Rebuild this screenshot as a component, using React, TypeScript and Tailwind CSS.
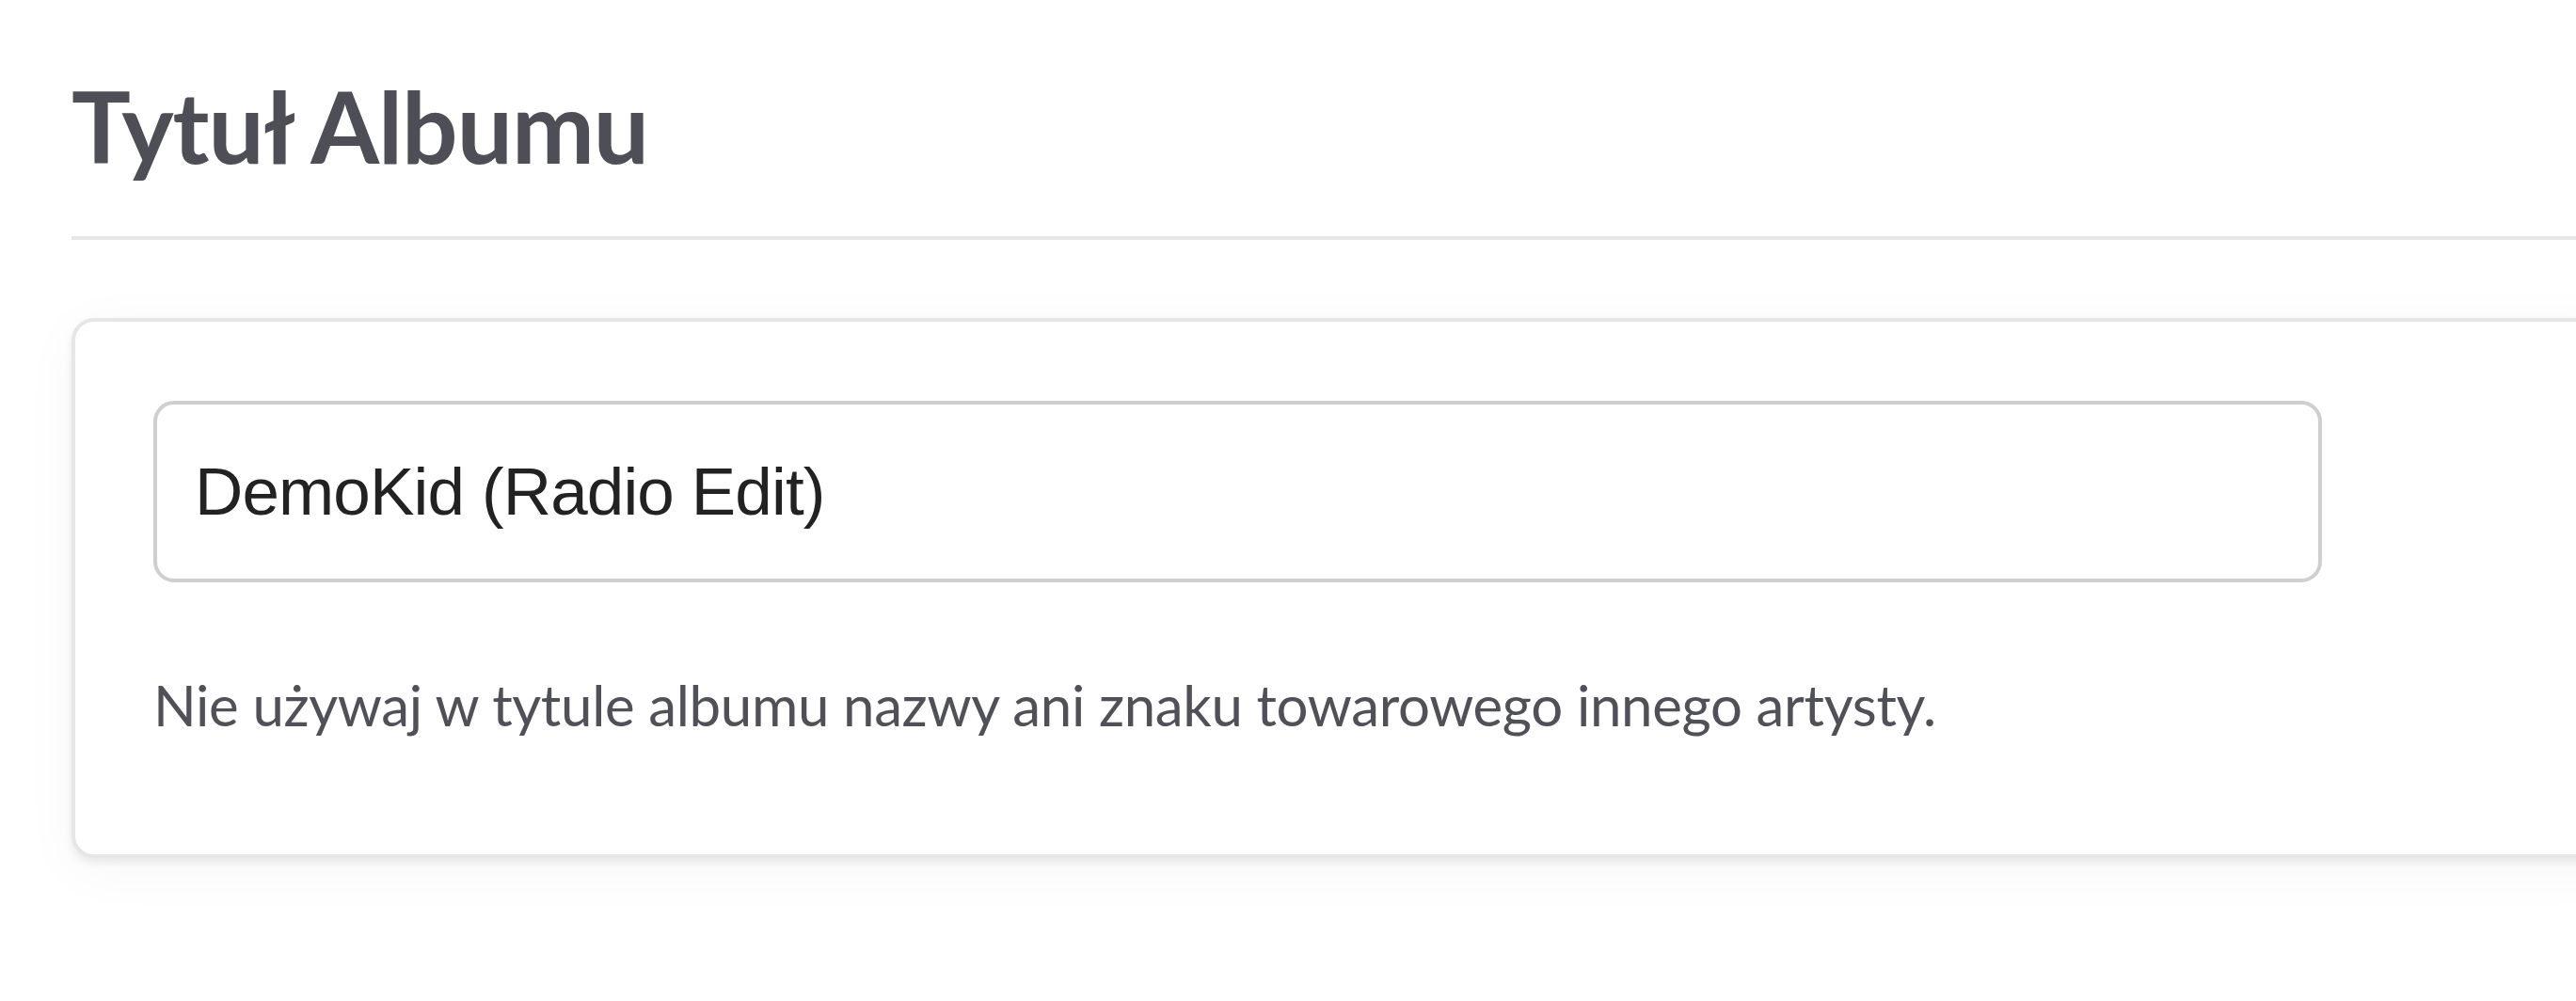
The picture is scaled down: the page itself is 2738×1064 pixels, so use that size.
import React from "react";

export default function App() {
  return (
    <div className="w-[2738px] h-[1064px] overflow-hidden bg-white">
      <div className="pl-[76px] pt-[70px]">
        <h1
          className="text-[105px] leading-[126px] font-bold text-[#4e4e56] m-0 tracking-[-1px]"
          style={{ fontFamily: "Lato, 'Noto Sans', sans-serif" }}
        >
          Tytuł Albumu
        </h1>
        <div className="mt-[55px] h-[4px] w-[2700px] bg-[#e6e7e9]" />
        <div className="mt-[83px] w-[2720px] rounded-[24px] border-[4px] border-[#e6e6e6] bg-white pl-[83px] pt-[84px] pb-[123px] shadow-[0_5px_8px_rgba(0,0,0,0.07),0_12px_60px_rgba(0,0,0,0.04)]">
          <div className="flex h-[193px] w-[2305px] items-center rounded-[22px] border-[4px] border-[#cfcfcf] bg-white pl-[40px]">
            <span
              className="text-[71px] leading-[80px] text-[#222222] tracking-[-0.85px]"
              style={{ fontFamily: "'Liberation Sans', Arial, sans-serif" }}
            >
              DemoKid (Radio Edit)
            </span>
          </div>
          <p
            className="mt-[94px] text-[60px] leading-[72px] text-[#505058] m-0 tracking-[-0.35px]"
            style={{ fontFamily: "Lato, 'Noto Sans', sans-serif" }}
          >
            Nie używaj w tytule albumu nazwy ani znaku towarowego innego artysty.
          </p>
        </div>
      </div>
    </div>
  );
}
